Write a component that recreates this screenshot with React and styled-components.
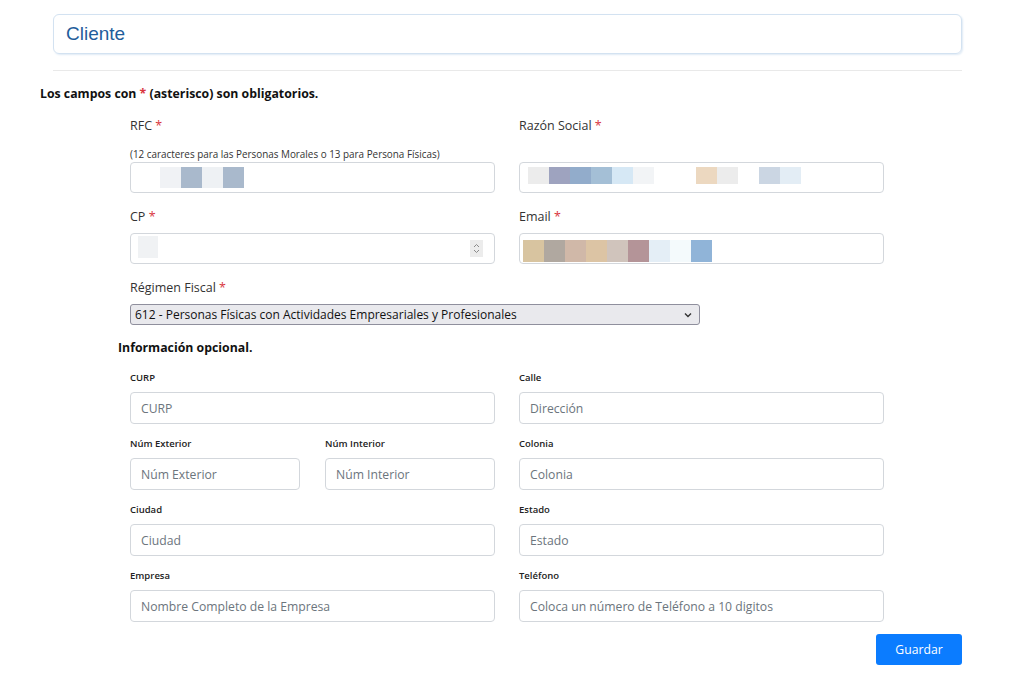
import React from "react";
import styled, { createGlobalStyle } from "styled-components";

const GlobalStyle = createGlobalStyle`
	body {
		margin: 0;
		background: #ffffff;
		font-family: "Open Sans", "Noto Sans", sans-serif;
		color: #212529;
	}
`;

const Page = styled.div`
	width: 922px;
	padding: 14px 0 20px 40px;
`;

const HeaderCard = styled.div`
	margin-left: 13px;
	height: 38px;
	display: flex;
	align-items: center;
	padding-left: 12px;
	border: 1px solid #d3e2f1;
	border-radius: 6px;
	box-shadow: 1px 1px 2px #dfeaf5;
	h1 {
		margin: 0;
		font-family: "Liberation Sans", Arial, sans-serif;
		font-weight: 400;
		font-size: 19px;
		color: #1f5d9b;
	}
`;

const Divider = styled.hr`
	margin: 16px 0 0 13px;
	border: 0;
	border-top: 1px solid #e9e9e9;
`;

const Note = styled.p`
	margin: 15px 0 0;
	font-size: 12.3px;
	line-height: 16px;
	font-weight: 700;
	color: #111;
`;

const Star = styled.span`
	color: #d9363e;
`;

const Section = styled.div`
	padding-left: 78px;
`;

const Grid = styled.div`
	display: grid;
	grid-template-columns: 365px 365px;
	column-gap: 24px;
	margin: 15px 0 0 12px;
	width: 754px;
`;

const Field = styled.div`
	display: flex;
	flex-direction: column;
	margin-bottom: ${(p) => p.$gap ?? 15}px;
	grid-column: ${(p) => (p.$wide ? "span 2" : "auto")};
`;

const Label = styled.label`
	font-size: 12.5px;
	line-height: 18px;
	color: #333;
	margin-bottom: 7px;
`;

const SmallLabel = styled.label`
	font-size: 9.5px;
	line-height: 14px;
	font-weight: 600;
	color: #222;
	margin-bottom: 7px;
`;

const Hint = styled.span`
	font-size: 9.9px;
	line-height: 14px;
	color: #333;
	margin: 5px 0 1px;
	white-space: nowrap;
`;

const InputWrap = styled.div`
	position: relative;
	margin-top: auto;
`;

const Input = styled.input`
	box-sizing: border-box;
	display: block;
	width: 100%;
	height: ${(p) => p.$h || 32}px;
	padding: 0 10px;
	border: 1px solid #d3d7dc;
	border-radius: 4px;
	font-family: inherit;
	font-size: 12.2px;
	color: #495057;
	outline: none;
	&::placeholder {
		color: #6c757d;
	}
`;

const Mosaic = styled.div`
	position: absolute;
	left: ${(p) => p.$x}px;
	top: ${(p) => p.$y}px;
	display: flex;
`;

const Tile = styled.span`
	width: ${(p) => p.$w || 21}px;
	height: ${(p) => p.$h}px;
	background: ${(p) => p.$c || "transparent"};
`;

const Spinner = styled.span`
	position: absolute;
	right: 12px;
	top: 7px;
	width: 13px;
	height: 17px;
	background: #ececec;
	display: flex;
	align-items: center;
	justify-content: center;
`;

const SplitPair = styled.div`
	display: grid;
	grid-template-columns: 170px 170px;
	column-gap: 25px;
`;

const SelectWrap = styled.div`
	position: relative;
	width: 570px;
	svg {
		position: absolute;
		right: 8px;
		top: 8px;
		pointer-events: none;
	}
`;

const Select = styled.select`
	appearance: none;
	box-sizing: border-box;
	display: block;
	width: 100%;
	height: 21px;
	margin: 0;
	padding: 0 4px;
	background: #e9e9ed;
	border: 1px solid #8f8f9d;
	border-radius: 3px;
	font-family: inherit;
	font-size: 12px;
	color: #111;
`;

const SubTitle = styled.p`
	margin: 15px 0 0;
	font-size: 12.3px;
	line-height: 16px;
	font-weight: 700;
	color: #111;
`;

const Actions = styled.div`
	display: flex;
	justify-content: flex-end;
	margin-top: -1px;
`;

const Button = styled.button`
	width: 86px;
	height: 31px;
	border: 0;
	border-radius: 3px;
	background: #0b7cff;
	color: #fff;
	font-family: inherit;
	font-size: 12.2px;
`;

const rfcTiles = ["#f0f2f5", "#a9b9cc", "#eef1f4", "#a9b9cc"];
const razonTiles = [
	"#ececec", "#9ea3bf", "#92accb", "#a4bfd6", "#d6e8f5", "#f2f4f6",
	null, null, "#ecd8c0", "#ececec", null, "#cbd6e3", "#e3edf5",
];
const emailTiles = [
	"#d8c4a0", "#b0a8a0", "#d0b8a8", "#dcc4a4", "#d0c4bc",
	"#b49498", "#e4eef6", "#f4fafc", "#90b4d8",
];

function Blur({ tiles, x, y, h }) {
	return (
		<Mosaic $x={x} $y={y}>
			{tiles.map((c, i) => (
				<Tile key={i} $c={c} $h={h} />
			))}
		</Mosaic>
	);
}

function Optional({ label, placeholder }) {
	return (
		<Field $gap={13}>
			<SmallLabel>{label}</SmallLabel>
			<Input placeholder={placeholder} />
		</Field>
	);
}

export default function App() {
	return (
		<Page>
			<GlobalStyle />
			<HeaderCard>
				<h1>Cliente</h1>
			</HeaderCard>
			<Divider />
			<Note>
				Los campos con <Star>*</Star> (asterisco) son obligatorios.
			</Note>
			<Section>
				<Grid>
					<Field>
						<Label>
							RFC <Star>*</Star>
						</Label>
						<Hint>(12 caracteres para las Personas Morales o 13 para Persona Físicas)</Hint>
						<InputWrap>
							<Input $h={31} />
							<Blur tiles={rfcTiles} x={30} y={5} h={21} />
						</InputWrap>
					</Field>
					<Field>
						<Label>
							Razón Social <Star>*</Star>
						</Label>
						<InputWrap>
							<Input $h={31} />
							<Blur tiles={razonTiles} x={9} y={5} h={17} />
						</InputWrap>
					</Field>
					<Field>
						<Label>
							CP <Star>*</Star>
						</Label>
						<InputWrap>
							<Input $h={31} />
							<Mosaic $x={8} $y={3}>
								<Tile $c="#f0f2f4" $w={20} $h={22} />
							</Mosaic>
							<Spinner>
								<svg width="7" height="11" viewBox="0 0 7 11" fill="none" stroke="#8a8a8a" strokeWidth="1">
									<path d="M1 4 L3.5 1.5 L6 4" />
									<path d="M1 7 L3.5 9.5 L6 7" />
								</svg>
							</Spinner>
						</InputWrap>
					</Field>
					<Field>
						<Label>
							Email <Star>*</Star>
						</Label>
						<InputWrap>
							<Input $h={31} />
							<Blur tiles={emailTiles} x={4} y={7} h={22} />
						</InputWrap>
					</Field>
					<Field $wide $gap={0}>
						<Label>
							Régimen Fiscal <Star>*</Star>
						</Label>
						<SelectWrap>
							<Select defaultValue="612">
								<option value="612">612 - Personas Físicas con Actividades Empresariales y Profesionales</option>
							</Select>
							<svg width="8" height="6" viewBox="0 0 8 6" fill="none" stroke="#333" strokeWidth="1.4">
								<path d="M1 1.5 L4 4.5 L7 1.5" />
							</svg>
						</SelectWrap>
					</Field>
				</Grid>
				<SubTitle>Información opcional.</SubTitle>
				<Grid>
					<Optional label="CURP" placeholder="CURP" />
					<Optional label="Calle" placeholder="Dirección" />
					<SplitPair>
						<Optional label="Núm Exterior" placeholder="Núm Exterior" />
						<Optional label="Núm Interior" placeholder="Núm Interior" />
					</SplitPair>
					<Optional label="Colonia" placeholder="Colonia" />
					<Optional label="Ciudad" placeholder="Ciudad" />
					<Optional label="Estado" placeholder="Estado" />
					<Optional label="Empresa" placeholder="Nombre Completo de la Empresa" />
					<Optional label="Teléfono" placeholder="Coloca un número de Teléfono a 10 digitos" />
				</Grid>
			</Section>
			<Actions>
				<Button type="button">Guardar</Button>
			</Actions>
		</Page>
	);
}
